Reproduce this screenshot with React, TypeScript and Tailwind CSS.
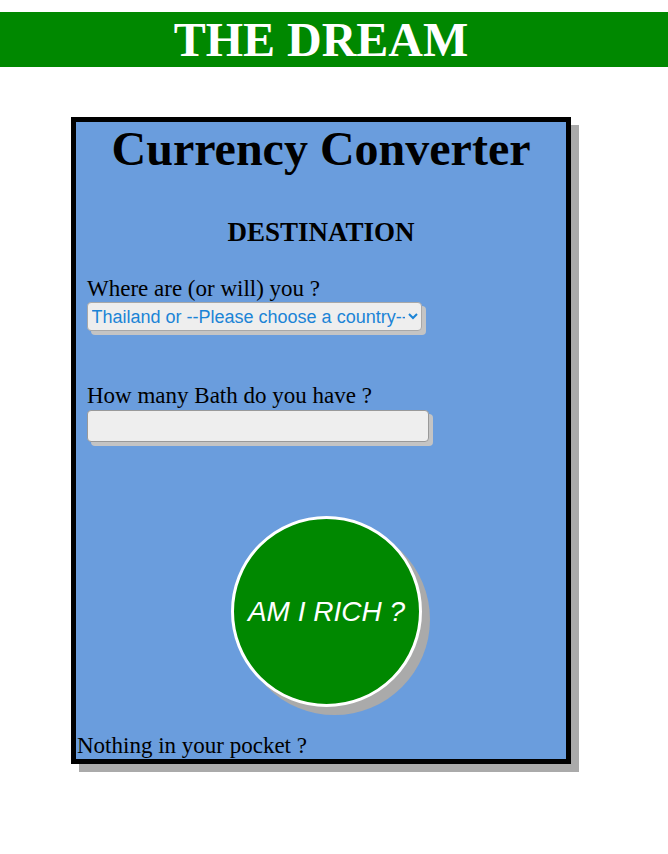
import React from "react";

export default function App() {
  const serif = { fontFamily: '"Liberation Serif", "Times New Roman", serif' };
  return (
    <div className="min-h-[854px] w-full bg-white" style={serif}>
      <div className="mt-[12px] h-[55px] w-full bg-[#008800] pr-[26px] text-center text-[48px] font-bold leading-[55px] text-white">
        THE DREAM
      </div>
      <div className="ml-[71px] mt-[50px] box-border h-[647px] w-[500px] border-[5px] border-black bg-[#6a9ddd] shadow-[8px_8px_0_#aaaaaa]">
        <h1 className="m-0 text-center text-[48px] font-bold leading-[53px] text-black">
          Currency Converter
        </h1>
        <h2 className="m-0 mt-[42px] text-center text-[27px] font-bold leading-[30px] text-black">
          DESTINATION
        </h2>
        <div className="pl-[11px]">
          <div className="mt-[29px] text-[23px] leading-[26px] text-black">
            Where are (or will) you ?
          </div>
          <select
            className="-ml-[0.5px] box-border block h-[29px] w-[335px] rounded-[4px] border border-[#a8a8a8] bg-[#eeeeee] pl-0 text-[18px] text-[#1b84d6] shadow-[4px_4px_0_#c4c4c4]"
            style={{ fontFamily: '"Liberation Sans", Arial, sans-serif' }}
            defaultValue="th"
          >
            <option value="th">Thailand or --Please choose a country--</option>
          </select>
          <div className="mt-[52px] text-[23px] leading-[26px] text-black">
            How many Bath do you have ?
          </div>
          <input
            type="text"
            className="mt-[1px] box-border block h-[32px] w-[342px] rounded-[4px] border border-[#999999] bg-[#eeeeee] shadow-[4px_4px_0_#c4c4c4]"
          />
          <div className="mx-auto mt-[74px] box-border flex h-[191px] w-[191px] items-center justify-center rounded-full border-[3px] border-white bg-[#008800] shadow-[8px_8px_0_#aaaaaa]">
            <span
              className="mt-[1px] text-[28px] italic text-white"
              style={{ fontFamily: '"Liberation Sans", Arial, sans-serif' }}
            >
              AM I RICH ?
            </span>
          </div>
        </div>
        <div className="mt-[26px] pl-[1px] text-[23px] leading-[26px] text-black">
          Nothing in your pocket ?
        </div>
      </div>
    </div>
  );
}
